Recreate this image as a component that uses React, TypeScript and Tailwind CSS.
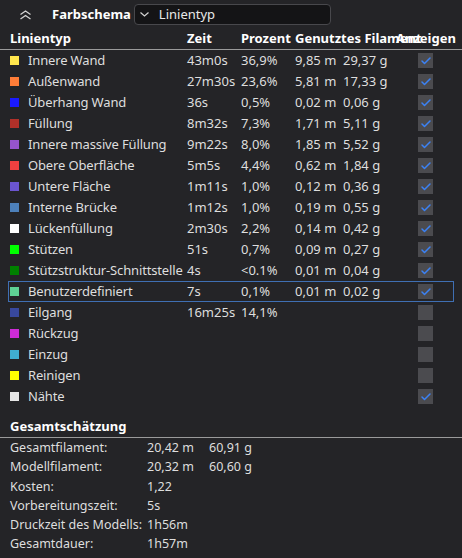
import { Check } from "lucide-react";

interface LineRow {
  name: string;
  color: string;
  time?: string;
  percent?: string;
  meters?: string;
  grams?: string;
  visible: boolean;
  selected?: boolean;
}

const rows: LineRow[] = [
  { name: "Innere Wand", color: "#ffe64d", time: "43m0s", percent: "36,9%", meters: "9,85 m", grams: "29,37 g", visible: true },
  { name: "Außenwand", color: "#ff7d38", time: "27m30s", percent: "23,6%", meters: "5,81 m", grams: "17,33 g", visible: true },
  { name: "Überhang Wand", color: "#1a1aff", time: "36s", percent: "0,5%", meters: "0,02 m", grams: "0,06 g", visible: true },
  { name: "Füllung", color: "#b03029", time: "8m32s", percent: "7,3%", meters: "1,71 m", grams: "5,11 g", visible: true },
  { name: "Innere massive Füllung", color: "#9654cc", time: "9m22s", percent: "8,0%", meters: "1,85 m", grams: "5,52 g", visible: true },
  { name: "Obere Oberfläche", color: "#f04040", time: "5m5s", percent: "4,4%", meters: "0,62 m", grams: "1,84 g", visible: true },
  { name: "Untere Fläche", color: "#6b55d0", time: "1m11s", percent: "1,0%", meters: "0,12 m", grams: "0,36 g", visible: true },
  { name: "Interne Brücke", color: "#4d80ba", time: "1m12s", percent: "1,0%", meters: "0,19 m", grams: "0,55 g", visible: true },
  { name: "Lückenfüllung", color: "#ffffff", time: "2m30s", percent: "2,2%", meters: "0,14 m", grams: "0,42 g", visible: true },
  { name: "Stützen", color: "#00ff00", time: "51s", percent: "0,7%", meters: "0,09 m", grams: "0,27 g", visible: true },
  { name: "Stützstruktur-Schnittstelle", color: "#008000", time: "4s", percent: "<0.1%", meters: "0,01 m", grams: "0,04 g", visible: true },
  { name: "Benutzerdefiniert", color: "#5ed194", time: "7s", percent: "0,1%", meters: "0,01 m", grams: "0,02 g", visible: true, selected: true },
  { name: "Eilgang", color: "#38489d", time: "16m25s", percent: "14,1%", visible: false },
  { name: "Rückzug", color: "#cd2bd6", visible: false },
  { name: "Einzug", color: "#40aed0", visible: false },
  { name: "Reinigen", color: "#ffff00", visible: false },
  { name: "Nähte", color: "#e6e6e6", visible: true },
];

const summary = [
  { label: "Gesamtfilament:", value: "20,42 m", extra: "60,91 g" },
  { label: "Modellfilament:", value: "20,32 m", extra: "60,60 g" },
  { label: "Kosten:", value: "1,22" },
  { label: "Vorbereitungszeit:", value: "5s" },
  { label: "Druckzeit des Modells:", value: "1h56m" },
  { label: "Gesamtdauer:", value: "1h57m" },
];

function Checkbox({ checked }: { checked: boolean }) {
  return (
    <div className="w-[15px] h-[15px] bg-[#4b4b4f] flex items-center justify-center">
      {checked && <Check className="w-[12px] h-[12px] text-[#3b82f6]" strokeWidth={3} />}
    </div>
  );
}

export default function App() {
  return (
    <div
      className="w-[462px] h-[558px] bg-[#242427] text-[#dedede] text-[13px] overflow-hidden"
      style={{ fontFamily: '"Noto Sans", "Open Sans", sans-serif' }}
    >
      {/* top bar */}
      <div className="h-[29px] flex items-center">
        <svg className="ml-[19px] w-[13px] h-[10px]" viewBox="0 0 13 10" fill="none" stroke="#d4d4d4" strokeWidth="1.3">
          <path d="M1.5 4.5 L6.5 1 L11.5 4.5" />
          <path d="M1.5 9 L6.5 5.5 L11.5 9" />
        </svg>
        <span className="ml-[20px] font-bold text-white">Farbschema</span>
        <div className="ml-[3px] w-[197px] h-[21px] rounded-[4px] border border-[#48484c] bg-[#141416] flex items-center">
          <svg className="ml-[5px] w-[9px] h-[5px]" viewBox="0 0 9 5" fill="none" stroke="#d4d4d4" strokeWidth="1.2">
            <path d="M0.5 0.5 L4.5 4 L8.5 0.5" />
          </svg>
          <span className="ml-[10px] text-[#e8e8e8]">Linientyp</span>
        </div>
      </div>

      {/* table header */}
      <div className="h-[21px] flex items-center font-bold text-white border-b border-[#9a9a9a] relative">
        <span className="ml-[10px] w-[177px]">Linientyp</span>
        <span className="w-[54px]">Zeit</span>
        <span className="w-[54px]">Prozent</span>
        <span className="whitespace-nowrap">Genutztes Filament</span>
        <span className="absolute left-[396px]">Anzeigen</span>
      </div>

      {/* rows */}
      <div>
        {rows.map((r) => (
          <div
            key={r.name}
            className={
              "h-[21px] mx-[8px] flex items-center border " +
              (r.selected ? "border-[#3f6fb3]" : "border-transparent")
            }
          >
            <div className="ml-[1px] w-[9px] h-[9px]" style={{ backgroundColor: r.color }} />
            <span className="ml-[9px] w-[159px] whitespace-nowrap tracking-[-0.15px]">{r.name}</span>
            <span className="w-[54px] whitespace-nowrap">{r.time}</span>
            <span className="w-[54px]">{r.percent}</span>
            <span className="w-[48px] whitespace-nowrap">{r.meters}</span>
            <span className="w-[75px] whitespace-nowrap">{r.grams}</span>
            <Checkbox checked={r.visible} />
          </div>
        ))}
      </div>

      {/* summary */}
      <div className="mt-[9px] h-[22px] flex items-center border-b border-[#9a9a9a] font-bold text-white">
        <span className="ml-[10px]">Gesamtschätzung</span>
      </div>
      <div className="pt-[1px] text-[12.5px]">
        {summary.map((s) => (
          <div key={s.label} className="h-[19.2px] flex items-center whitespace-nowrap">
            <span className="ml-[10px] w-[137px]">{s.label}</span>
            <span className="w-[62px]">{s.value}</span>
            {s.extra && <span>{s.extra}</span>}
          </div>
        ))}
      </div>
    </div>
  );
}
